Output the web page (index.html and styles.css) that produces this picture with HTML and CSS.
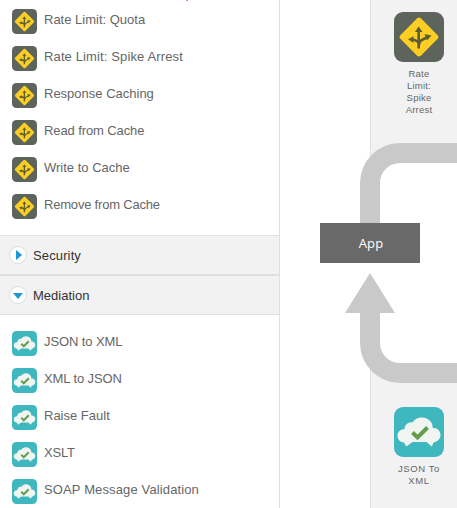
FILE: index.html
```html
<!DOCTYPE html>
<html lang="en">
<head>
<meta charset="utf-8">
<title>Policies</title>
<link rel="stylesheet" href="styles.css">
</head>
<body>
<svg class="defs" aria-hidden="true">
  <symbol id="traffic" viewBox="0 0 50 50">
    <rect width="50" height="50" rx="9" fill="#5c645b"/>
    <rect x="10.500" y="10.500" width="29" height="29" rx="3" transform="rotate(45 25 25)" fill="#fccd22"/>
    <path d="M24.700 36.500V18M25 33C25 29 27 28 33 25.500M24.700 32C24.500 29 22 28 18 27.500" fill="none" stroke="#5c5d35" stroke-width="2.600"/>
    <path d="M24.700 14.500l3.800 5.500h-7.600zM14 27.300l5.500-3v6.700zM37.500 23.500l-7-1.500 2.500 6.500z" fill="#5c5d35"/>
  </symbol>
  <symbol id="mediation" viewBox="0 0 50 50">
    <rect width="50" height="50" rx="9" fill="#3fb7bf"/>
    <path d="M10 35.500C5.500 35 3.500 32 3.500 28.500 3.500 24.500 7 22 10.500 22.300 10.500 18 14.500 14.500 18.500 15.500 20.500 12 24.500 10.300 28.500 10.500 34.500 10.800 39 15.500 38.700 21 43.500 20.500 46.500 24 46.500 28 46.500 32 43.500 34.500 39.500 35.500L37.800 39.500 32.500 35H18.500L12.300 39.500z" fill="#f1f5f2"/>
    <path d="M18.500 25.500l5 5 10-10" fill="none" stroke="#649d4e" stroke-width="4"/>
  </symbol>
</svg>
<div class="editor">
  <nav class="palette">
    <i class="marker"></i>
    <ul class="policies policies-traffic">
      <li><svg class="icon"><use href="#traffic"/></svg><span>Rate Limit: Quota</span></li>
      <li><svg class="icon"><use href="#traffic"/></svg><span class="loose">Rate Limit: Spike Arrest</span></li>
      <li><svg class="icon"><use href="#traffic"/></svg><span>Response Caching</span></li>
      <li><svg class="icon"><use href="#traffic"/></svg><span class="snug">Read from Cache</span></li>
      <li><svg class="icon"><use href="#traffic"/></svg><span>Write to Cache</span></li>
      <li><svg class="icon"><use href="#traffic"/></svg><span class="tight">Remove from Cache</span></li>
    </ul>
    <h2 class="section loose">
      <svg class="toggle" viewBox="0 0 18 18"><circle cx="9" cy="9" r="8.500"/><path d="M7 4l6.200 5L7 14z"/></svg>Security
    </h2>
    <h2 class="section">
      <svg class="toggle" viewBox="0 0 18 18"><circle cx="9" cy="9" r="8.500"/><path d="M4 7h10l-5 6z"/></svg>Mediation
    </h2>
    <ul class="policies">
      <li><svg class="icon"><use href="#mediation"/></svg><span class="snug">JSON to XML</span></li>
      <li><svg class="icon"><use href="#mediation"/></svg><span class="snug">XML to JSON</span></li>
      <li><svg class="icon"><use href="#mediation"/></svg><span>Raise Fault</span></li>
      <li><svg class="icon"><use href="#mediation"/></svg><span class="tight">XSLT</span></li>
      <li><svg class="icon"><use href="#mediation"/></svg><span class="loose">SOAP Message Validation</span></li>
    </ul>
  </nav>
  <main class="canvas">
    <section class="lane lane-request">
      <figure class="step"><svg><use href="#traffic"/></svg><figcaption>Rate<br>Limit:<br>Spike<br>Arrest</figcaption></figure>
    </section>
    <section class="lane lane-response">
      <figure class="step"><svg><use href="#mediation"/></svg><figcaption class="wide">JSON To<br>XML</figcaption></figure>
    </section>
    <svg class="flow" viewBox="0 0 112 240">
      <path d="M112 10H55A30 30 0 0 0 25 40V200A30 30 0 0 0 55 230H112z" fill="#fff"/>
      <path d="M112 0H55A40 40 0 0 0 15 40V90H35V40A20 20 0 0 1 55 20H112zM25 130L50 170H35V200A20 20 0 0 0 55 220H112V240H55A40 40 0 0 1 15 200V170H0z" fill="#c9c9c9"/>
    </svg>
    <div class="app">App</div>
  </main>
</div>
</body>
</html>
```
FILE: styles.css
```css
* { box-sizing: border-box; }
body {
  margin: 0;
  overflow: hidden;
  background: #fff;
  color: #666;
  font-family: "Liberation Sans", Arial, sans-serif;
}
.defs { position: absolute; width: 0; height: 0; }
.editor { display: flex; width: 457px; height: 508px; overflow: hidden; }
.palette { width: 280px; flex: none; border-right: 1px solid #dfdfdf; }
.marker {
  position: absolute;
  left: 186px;
  top: 0;
  width: 2px;
  height: 1px;
  background: #f08a70;
}
.policies { list-style: none; margin: 0; padding: 16px 0 0 12px; }
.policies-traffic { height: 235px; padding-top: 9px; }
.policies li {
  display: flex;
  height: 37px;
  gap: 7px;
  font-size: 13px;
  line-height: 21px;
  white-space: nowrap;
}
/* Label tracking steps */
.loose { letter-spacing: 0.13px; }
.snug { letter-spacing: -0.1px; }
.tight { letter-spacing: -0.2px; }
.icon { width: 25px; height: 25px; flex: none; }
.section {
  display: flex;
  align-items: center;
  gap: 6px;
  height: 40px;
  margin: 0;
  padding-left: 9px;
  border: solid #dfdfdf;
  border-width: 1px 0;
  background: #f2f2f2;
  color: #333;
  font-size: 13px;
  font-weight: normal;
}
.toggle { width: 18px; height: 18px; }
.toggle circle { fill: #fff; stroke: #d9dee0; }
.toggle path { fill: #1c96d4; }
.canvas { position: relative; flex: 1; min-width: 0; overflow: hidden; }
.lane {
  margin-left: 90px;
  padding-left: 23px;
  border-left: 1px solid #dfdfdf;
  background: #f2f2f2;
}
.lane-request { height: 183px; padding-top: 12px; }
.lane-response { height: 165px; margin-top: 160px; padding-top: 64px; }
.step { width: 50px; margin: 0; }
.step svg { display: block; width: 50px; height: 50px; }
.step figcaption {
  margin-top: 6px;
  font-size: 9.5px;
  line-height: 12px;
  letter-spacing: 0.2px;
  text-align: center;
  white-space: nowrap;
}
.step .wide { letter-spacing: 0.6px; }
.flow { position: absolute; left: 65px; top: 143px; width: 112px; height: 240px; }
.app {
  position: absolute;
  left: 40px;
  top: 223px;
  width: 100px;
  height: 40px;
  padding-left: 2px;
  background: #696969;
  color: #fff;
  font: 13px/41px "Open Sans", sans-serif;
  letter-spacing: 0.2px;
  text-align: center;
}
```
